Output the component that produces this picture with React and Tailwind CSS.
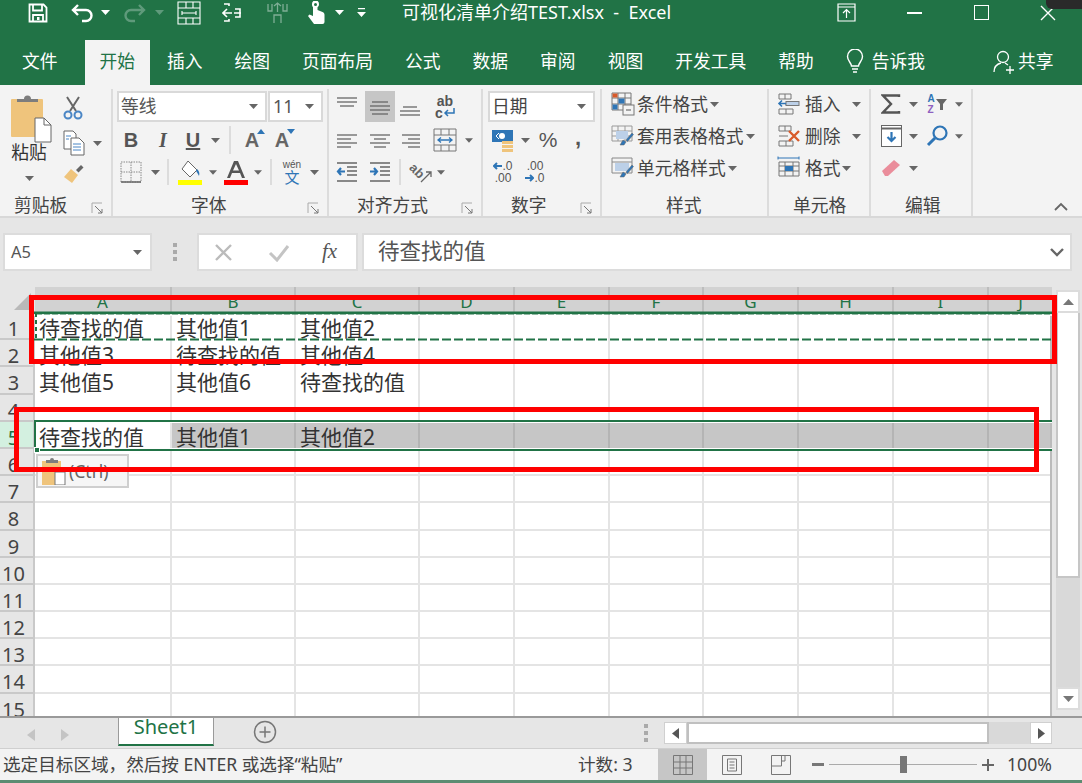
import React from 'react';

const columns = ['A', 'B', 'C', 'D', 'E', 'F', 'G', 'H', 'I', 'J'];
const gridCols = 'grid grid-cols-[137px_124px_124px_95px_95px_94px_95px_95px_95px_63px]';
const cells = {
  1: ['待查找的值', '其他值1', '其他值2'],
  2: ['其他值3', '待查找的值', '其他值4'],
  3: ['其他值5', '其他值6', '待查找的值'],
  5: ['待查找的值', '其他值1', '其他值2'],
};
const tabs = ['开始', '插入', '绘图', '页面布局', '公式', '数据', '审阅', '视图', '开发工具', '帮助'];

function Caret({ className = 'fill-[#666]' }) {
  return (
    <svg width="9" height="5" viewBox="0 0 9 5" className={className}>
      <path d="M0 0h9L4.5 5z" />
    </svg>
  );
}

function Sep({ className = '' }) {
  return <div className={`w-[2px] bg-[#dcdcdc] ${className}`} />;
}

function Launcher() {
  return (
    <svg width="13" height="13" viewBox="0 0 13 13" fill="none" stroke="#777">
      <path d="M1 11V1h10" stroke="#aaa" />
      <path d="M4 4l7 7M11 7v4H7" />
    </svg>
  );
}

function Label({ text, pad, launcher }) {
  return (
    <div className={`mt-auto h-[27px] pt-[5px] flex items-center pr-[7px] text-[#444] text-[17.75px] ${pad}`}>
      <span>{text}</span>
      {launcher && <span className="ml-auto mt-[6px] flex"><Launcher /></span>}
    </div>
  );
}

function Group({ width, children }) {
  return <div className={`${width} h-[127px] shrink-0 flex flex-col border-r-2 border-[#dcdcdc]`}>{children}</div>;
}

function Lines({ y, x1 = 1, x2 = 21, w = 22 }) {
  return (
    <svg width={w} height="22" viewBox={`0 0 ${w} 22`} stroke="#666" strokeWidth="1.3">
      {y.map((v, i) => <path key={i} d={`M${Array.isArray(x1) ? x1[i] : x1} ${v}H${Array.isArray(x2) ? x2[i] : x2}`} />)}
    </svg>
  );
}

function Brush() {
  return <path d="M9 21l3-5 3 2-2 3zM15 16l6-7 1.5 1.5-6 7z" fill="#2e75b6" stroke="#666" strokeWidth=".5" />;
}

function TitleBar() {
  return (
    <div className="h-[38px] pb-[13px] flex items-center text-white shrink-0 relative">
      <svg width="20" height="20" viewBox="0 0 20 20" fill="none" stroke="white" strokeWidth="1.8" className="ml-[28px]">
        <path d="M1.5 1.5h14l3 3v14h-17zM5 1.5v6h9v-6M5 18v-6h10v6" />
        <rect x="9" y="14" width="2.5" height="3" fill="white" stroke="none" />
      </svg>
      <svg width="23" height="20" viewBox="0 0 23 20" fill="none" stroke="white" strokeWidth="2.4" className="ml-[23px]">
        <path d="M2 7h13a5.5 5.5 0 0 1 0 11h-4M7 2L2 7l5 5" />
      </svg>
      <span className="ml-[7px]"><Caret className="fill-white" /></span>
      <svg width="23" height="20" viewBox="0 0 23 20" fill="none" stroke="#5f9a7b" strokeWidth="2.4" className="ml-[13px]">
        <path d="M21 7H8a5.5 5.5 0 0 0 0 11h4M16 2l5 5-5 5" />
      </svg>
      <span className="ml-[9px]"><Caret className="fill-[#5f9a7b]" /></span>
      <svg width="24" height="24" viewBox="0 0 24 24" fill="none" stroke="white" strokeWidth="1.1" className="ml-[13px]">
        <path d="M1 1h22v22H1zM1 7h22M1 17h22M9 1v6M16 1v6M9 17v6M16 17v6M5 12h14M5 10v4M19 10v4" />
      </svg>
      <svg width="20" height="24" viewBox="0 0 20 24" fill="none" stroke="white" strokeWidth="1.6" className="ml-[21px]">
        <path d="M2 3h5v2M12 12h7M13 8h5v8h-5M2 20h5v-2M10 12H1M5 8l-4 4 4 4" />
      </svg>
      <svg width="23" height="24" viewBox="0 0 23 24" fill="none" stroke="#7fae95" strokeWidth="1.3" className="ml-[24px]">
        <path d="M2 3v7h4V3M17 3v7h4V3M11.5 11V2M8 5l3.5-3L15 5M8 22v-8h7v8" />
      </svg>
      <svg width="19" height="24" viewBox="0 0 19 24" fill="white" className="ml-[17px]">
        <path d="M6 3a3.5 3.5 0 0 1 7 0c0 1.5-.5 2.5-1.5 3.2V9l5 2c1.5.6 2 1.5 2 3v7a2 2 0 0 1-2 2H8L2 15l1.5-1.5L7 15V6.2A4 4 0 0 1 6 3z" />
        <circle cx="9.5" cy="3.5" r="1.5" fill="#217346" />
      </svg>
      <span className="ml-[10px]"><Caret className="fill-white" /></span>
      <svg width="9" height="9" viewBox="0 0 9 9" fill="white" className="ml-[13px]">
        <path d="M1 0h7v1.3H1zM0 4h9L4.5 9z" />
      </svg>
      <span className="ml-[36px] text-[18px] whitespace-pre">可视化清单介绍TEST.xlsx  -  Excel</span>
      <div className="ml-auto flex items-center mr-[26px]">
        <svg width="19" height="19" viewBox="0 0 19 19" fill="none" stroke="white" strokeWidth="1.2">
          <path d="M1 1h17v17H1zM1 4h17M9.5 15V7M6 10l3.5-3.5L13 10" />
        </svg>
        <div className="w-[15px] h-[2px] bg-white ml-[51px]" />
        <div className="w-[15px] h-[15px] border-[1.5px] border-white ml-[52px]" />
        <svg width="16" height="16" viewBox="0 0 16 16" stroke="white" strokeWidth="1.4" className="ml-[51px]">
          <path d="M1 1l14 14M15 1L1 15" />
        </svg>
      </div>
    </div>
  );
}

function TabRow() {
  return (
    <div className="h-[47px] flex items-end text-white text-[17.75px] shrink-0 pl-[7px]">
      <div className="h-[45px] pb-[2px] px-[15px] flex items-center mr-[12px]">文件</div>
      <div className="flex gap-[2px]">
        {tabs.map((t) => (
          <div key={t} className={`h-[45px] pb-[2px] px-[15px] flex items-center whitespace-nowrap ${t === '开始' ? 'bg-[#f3f3f3] text-[#217346]' : ''}`}>{t}</div>
        ))}
      </div>
      <div className="h-[45px] pb-[2px] flex items-center ml-[17px]">
        <svg width="18" height="26" viewBox="0 0 18 26" fill="none" stroke="white" strokeWidth="1.4">
          <path d="M5.5 17c0-3-4-5-4-9.5a7.5 7.5 0 0 1 15 0c0 4.500-4 6.500-4 9.500zM6 20h6M7 23h4" />
        </svg>
        <span className="ml-[8px]">告诉我</span>
        <svg width="22" height="24" viewBox="0 0 22 24" fill="none" stroke="white" strokeWidth="1.3" className="ml-[68px]">
          <circle cx="10" cy="7" r="5.5" />
          <path d="M1 22c0-5 3-8 7-9M12 13l3 2M13 20h8M17 16v8" />
        </svg>
        <span className="ml-[3px]">共享</span>
      </div>
    </div>
  );
}

function ClipboardGroup() {
  return (
    <Group width="w-[113px]">
      <div className="flex">
        <div className="w-[62px] flex flex-col items-center pt-[6px]">
          <svg width="42" height="48" viewBox="0 0 42 48">
            <rect x="1" y="4" width="32" height="38" rx="1" fill="#efc47c" />
            <path d="M7 7V4h7a3.5 3.5 0 0 1 7 0h7v3z" fill="#7d7d7d" />
            <path d="M25 23h9l7 7v17H25z" fill="white" stroke="#666" />
            <path d="M34 23v7h7" fill="none" stroke="#666" />
          </svg>
          <span className="text-[17.75px] text-[#333] leading-[22px] -mt-[2px] -ml-[4px]">粘贴</span>
          <span className="mt-[13px] -ml-[4px] flex"><Caret /></span>
        </div>
        <div className="flex flex-col pt-[6px] pl-[1px]">
          <svg width="20" height="26" viewBox="0 0 20 26" fill="none">
            <path d="M4 2l9 14M16 2L7 16" stroke="#666" strokeWidth="2" />
            <circle cx="5" cy="20" r="3.5" stroke="#4a86c5" strokeWidth="2" />
            <circle cx="15" cy="20" r="3.5" stroke="#4a86c5" strokeWidth="2" />
          </svg>
          <div className="flex items-center mt-[9px]">
            <svg width="22" height="26" viewBox="0 0 22 26" fill="white" stroke="#666">
              <path d="M1 1h9l3 3v15H1z" />
              <path d="M8 8h8l5 5v12H8z" />
              <path d="M10 14h8M10 17h8M10 20h8M3 6h5M3 9h3" stroke="#4a86c5" fill="none" />
            </svg>
            <span className="ml-[8px] flex"><Caret /></span>
          </div>
          <svg width="22" height="22" viewBox="0 0 22 22" className="mt-[7px]">
            <path d="M1 14l7-8 7 6-6 8z" fill="#efc47c" />
            <path d="M13 7l5-5 2.5 2.5-5 5z" fill="#666" />
          </svg>
        </div>
      </div>
      <Label text="剪贴板" pad="pl-[14px]" launcher />
    </Group>
  );
}

function SmallA({ up }) {
  return (
    <div className="relative text-[#666] text-[20px] font-bold leading-[24px] font-['Liberation_Sans',sans-serif]">
      A
      <svg width="8" height="5" viewBox="0 0 8 5" className="absolute -right-[6px] top-[1px] fill-[#2e75b6]">
        <path d={up ? 'M0 5h8L4 0z' : 'M0 0h8L4 5z'} />
      </svg>
    </div>
  );
}

function FontGroup() {
  return (
    <Group width="w-[216px]">
      <div className="pl-[4px] pt-[2px]">
        <div className="flex h-[31px] gap-[1px]">
          <div className="w-[150px] bg-white border-2 border-[#d9d9d9] flex items-center pl-[2px] pr-[7px] text-[17.75px] text-[#555]">
            等线<span className="ml-auto flex"><Caret /></span>
          </div>
          <div className="w-[55px] bg-white border-2 border-[#d9d9d9] flex items-center pl-[3px] pr-[7px] text-[17.75px] text-[#555]">
            11<span className="ml-auto flex"><Caret /></span>
          </div>
        </div>
        <div className="flex items-center h-[36px] text-[#555]">
          <div className="w-[28px] text-center text-[20px] font-bold font-['Liberation_Sans',sans-serif]">B</div>
          <div className="w-[36px] text-center text-[20px] italic font-bold font-['Liberation_Serif',serif]">I</div>
          <div className="w-[24px] text-center text-[20px] font-bold underline font-['Liberation_Sans',sans-serif]">U</div>
          <div className="w-[20px] flex justify-center"><Caret /></div>
          <div className="w-[10px] flex justify-center"><Sep className="h-[28px]" /></div>
          <div className="w-[34px] flex justify-center"><SmallA up /></div>
          <div className="w-[26px] flex justify-center"><SmallA /></div>
        </div>
        <div className="flex items-center h-[28px]">
          <div className="w-[28px] flex justify-center">
            <svg width="22" height="22" viewBox="0 0 22 22" fill="none" stroke="#888" strokeDasharray="1.5 1">
              <path d="M1 1h20v20H1zM11 1v20M1 11h20" />
              <path d="M1 21h20" stroke="#666" strokeDasharray="none" strokeWidth="1.5" />
            </svg>
          </div>
          <div className="w-[20px] flex justify-center"><Caret /></div>
          <div className="w-[6px] flex justify-center"><Sep className="h-[26px]" /></div>
          <div className="w-[38px] flex justify-center">
            <svg width="24" height="26" viewBox="0 0 24 26">
              <path d="M10 2l9 9-7 7-8-8z" fill="white" stroke="#666" />
              <path d="M19 10c2 2 3 4 2 7-1-2-2-4-3-5z" fill="#2e75b6" />
              <rect y="21" width="24" height="5" fill="#ffff00" />
            </svg>
          </div>
          <div className="w-[8px] flex justify-center"><Caret /></div>
          <div className="w-[37px] flex justify-center">
            <svg width="24" height="26" viewBox="0 0 24 26">
              <path d="M3 19L10 2h4l7 17h-3l-2-5H8l-2 5zM9 11.5h6L12 5z" fill="#555" fillRule="evenodd" />
              <rect y="21" width="24" height="5" fill="#ff0000" />
            </svg>
          </div>
          <div className="w-[8px] flex justify-center"><Caret /></div>
          <div className="w-[18px] flex justify-center"><Sep className="h-[26px]" /></div>
          <div className="w-[24px] flex flex-col items-center leading-none">
            <span className="text-[10px] text-[#555] font-['Liberation_Sans',sans-serif]">wén</span>
            <span className="text-[15px] text-[#2e75b6] leading-[14px]">文</span>
          </div>
          <div className="w-[20px] flex justify-center"><Caret /></div>
        </div>
      </div>
      <Label text="字体" pad="pl-[78px]" launcher />
    </Group>
  );
}

function AlignGroup() {
  return (
    <Group width="w-[154px]">
      <div className="pt-[2px]">
        <div className="flex items-center h-[31px]">
          <div className="w-[36px] flex justify-center -mt-[8px]"><Lines y={[6, 10, 14]} x1={[1, 1, 4]} x2={[21, 21, 18]} /></div>
          <div className="w-[30px] h-[31px] bg-[#c6c6c6] flex items-center justify-center"><Lines y={[6, 10, 14, 18]} x1={[3, 1, 1, 3]} x2={[19, 21, 21, 19]} /></div>
          <div className="w-[30px] flex justify-center mt-[6px]"><Lines y={[8, 12, 16]} x1={[4, 1, 1]} x2={[18, 21, 21]} /></div>
          <div className="w-[40px] flex flex-col items-center text-[#555] leading-[12px] text-[14px] font-bold font-['Liberation_Sans',sans-serif]">
            <span>ab</span>
            <span className="flex items-center">c
              <svg width="12" height="9" viewBox="0 0 12 9" fill="none" stroke="#2e75b6" strokeWidth="1.5"><path d="M11 0v5H2M5 2L2 5l3 3" /></svg>
            </span>
          </div>
        </div>
        <div className="flex items-center h-[36px]">
          <div className="w-[36px] flex justify-center"><Lines y={[6, 10, 14, 18]} x1={1} x2={[21, 15, 21, 15]} /></div>
          <div className="w-[30px] flex justify-center"><Lines y={[6, 10, 14, 18]} x1={[1, 5, 1, 5]} x2={[21, 17, 21, 17]} /></div>
          <div className="w-[30px] flex justify-center"><Lines y={[6, 10, 14, 18]} x1={[3, 9, 3, 9]} x2={21} /></div>
          <div className="w-[40px] flex justify-center">
            <svg width="24" height="24" viewBox="0 0 24 24" fill="none" stroke="#777">
              <path d="M1 1h22v22H1zM1 7h22M1 17h22M8 1v6M16 1v6M8 17v6M16 17v6" />
              <path d="M5 12h14M8 9.5L5 12l3 2.5M16 9.5l3 2.5-3 2.5" stroke="#2e75b6" strokeWidth="1.3" />
            </svg>
          </div>
          <div className="w-[8px] flex justify-center"><Caret /></div>
        </div>
        <div className="flex items-center h-[28px]">
          <div className="w-[36px] flex justify-center">
            <svg width="22" height="22" viewBox="0 0 22 22" fill="none" stroke="#666" strokeWidth="1.3">
              <path d="M1 2h20M11 6h10M11 10h10M11 14h10M1 20h20" />
              <path d="M9 10.5H2M5 7l-3 3.5L5 14" stroke="#2e75b6" strokeWidth="2.2" />
            </svg>
          </div>
          <div className="w-[30px] flex justify-center">
            <svg width="22" height="22" viewBox="0 0 22 22" fill="none" stroke="#666" strokeWidth="1.3">
              <path d="M1 2h20M11 6h10M11 10h10M11 14h10M1 20h20" />
              <path d="M1 10.5h7M5 7l3 3.5L5 14" stroke="#2e75b6" strokeWidth="2.2" />
            </svg>
          </div>
          <div className="w-[10px] flex justify-center"><Sep className="h-[26px]" /></div>
          <div className="w-[32px] flex justify-center">
            <svg width="24" height="24" viewBox="0 0 24 24" fill="none" stroke="#666" strokeWidth="1.3">
              <path d="M12 22L22 12M22 17v-5h-5" />
              <text x="1" y="15" fontSize="13" fontWeight="700" fill="#666" stroke="none" transform="rotate(45 8 10)" fontFamily="Liberation Sans">ab</text>
            </svg>
          </div>
          <div className="w-[8px] flex justify-center"><Caret /></div>
        </div>
      </div>
      <Label text="对齐方式" pad="pl-[28px]" launcher />
    </Group>
  );
}

function NumberGroup() {
  return (
    <Group width="w-[119px]">
      <div className="pl-[5px] pt-[2px]">
        <div className="w-[107px] h-[31px] bg-white border-2 border-[#d9d9d9] flex items-center pl-[2px] pr-[7px] text-[17.75px] text-[#444]">
          日期<span className="ml-auto flex"><Caret /></span>
        </div>
        <div className="flex items-center h-[36px]">
          <div className="w-[30px] flex justify-center">
            <svg width="24" height="24" viewBox="0 0 24 24">
              <rect x="1" y="2" width="21" height="12" fill="#2e75b6" />
              <circle cx="11" cy="8" r="3" fill="white" />
              <path d="M5 8l3-3M5 8l3 3" stroke="white" />
              <rect x="11" y="13" width="11" height="3" fill="#efc47c" />
              <rect x="11" y="17" width="11" height="3" fill="#efc47c" />
              <rect x="11" y="21" width="11" height="3" fill="#efc47c" />
            </svg>
          </div>
          <div className="w-[14px] flex justify-center"><Caret /></div>
          <div className="w-[32px] text-center text-[21px] text-[#555] font-['Liberation_Sans',sans-serif]">%</div>
          <div className="w-[28px] text-center text-[22px] font-bold text-[#555] leading-none -mt-[4px] font-['Liberation_Sans',sans-serif]">,</div>
        </div>
        <div className="flex items-center h-[28px] text-[12px] leading-[12px] text-[#555] font-['Liberation_Sans',sans-serif]">
          <div className="w-[30px] flex flex-col items-center">
            <span className="flex items-center">
              <svg width="9" height="8" viewBox="0 0 9 8" fill="none" stroke="#2e75b6" strokeWidth="2"><path d="M9 4H1M4 1L1 4l3 3" /></svg>.0
            </span>
            <span>.00</span>
          </div>
          <div className="w-[34px] flex flex-col items-center">
            <span>.00</span>
            <span className="flex items-center">
              <svg width="9" height="8" viewBox="0 0 9 8" fill="none" stroke="#2e75b6" strokeWidth="2"><path d="M0 4h8M5 1l3 3-3 3" /></svg>.0
            </span>
          </div>
        </div>
      </div>
      <Label text="数字" pad="pl-[28px]" launcher />
    </Group>
  );
}

function StyleRow({ icon, text, gap = 'ml-[2px]', caretGap = 'ml-[2px]' }) {
  return (
    <div className="h-[32px] flex items-center text-[17.75px] text-[#444] whitespace-nowrap">
      <span className="w-[24px] flex">{icon}</span>
      <span className={gap}>{text}</span>
      <span className={`${caretGap} flex`}><Caret /></span>
    </div>
  );
}

function StylesGroup() {
  return (
    <Group width="w-[167px]">
      <div className="pl-[9px] -mt-[1px]">
        <StyleRow text="条件格式" icon={
          <svg width="24" height="24" viewBox="0 0 24 24" fill="none">
            <path d="M1 1h19v17H1zM1 6h19M1 12h19M7 1v17M14 1v17" stroke="#777" />
            <rect x="1.5" y="1.5" width="5" height="4" fill="#d85a2a" />
            <rect x="7.5" y="6.5" width="6" height="5" fill="#2e75b6" />
            <rect x="1.5" y="12.5" width="5" height="5" fill="#2e75b6" />
            <rect x="12" y="13" width="11" height="10" fill="#f3f3f3" stroke="#777" />
            <path d="M15 18h5" stroke="#555" />
          </svg>
        } />
        <StyleRow text="套用表格格式" icon={
          <svg width="24" height="24" viewBox="0 0 24 24" fill="none">
            <path d="M1 2h20v15H1zM1 7h20M1 12h20M7 2v15M14 2v15" stroke="#999" />
            <rect x="5" y="7" width="12" height="8" fill="#bcd0e8" />
            <Brush />
          </svg>
        } />
        <StyleRow text="单元格样式" icon={
          <svg width="24" height="24" viewBox="0 0 24 24" fill="none">
            <path d="M1 2h20v15H1zM1 6h20" stroke="#888" />
            <rect x="4" y="7" width="14" height="8" fill="#bcd0e8" />
            <Brush />
          </svg>
        } />
      </div>
      <Label text="样式" pad="pl-[64px]" />
    </Group>
  );
}

function CellsGroup() {
  return (
    <Group width="w-[102px]">
      <div className="pl-[8px] -mt-[1px]">
        <StyleRow text="插入" gap="ml-[4px]" caretGap="ml-[11px]" icon={
          <svg width="24" height="24" viewBox="0 0 24 24" fill="none">
            <path d="M2 2h12v5H2zM2 17h14v5H2zM8 2v5M9 17v5M8 12h14" stroke="#777" />
            <rect x="9" y="9.5" width="13" height="4" fill="#bcd0e8" stroke="#777" />
            <path d="M9 11.5H2M5 8.5l-3 3 3 3" stroke="#2e75b6" strokeWidth="1.6" />
          </svg>
        } />
        <StyleRow text="删除" gap="ml-[4px]" caretGap="ml-[11px]" icon={
          <svg width="24" height="24" viewBox="0 0 24 24" fill="none">
            <path d="M2 2h12v5H2zM2 17h14v5H2zM8 2v5M9 17v5M2 12h9" stroke="#777" />
            <path d="M12 7l10 10M22 7L12 17" stroke="#d85a2a" strokeWidth="2.4" />
          </svg>
        } />
        <StyleRow text="格式" gap="ml-[4px]" caretGap="ml-[1px]" icon={
          <svg width="24" height="24" viewBox="0 0 24 24" fill="none">
            <path d="M1 2h21M1 .5v3M22 .5v3" stroke="#2e75b6" />
            <path d="M2 6h20v14H2zM2 10h20M2 15h20M8 6v14M16 6v14" stroke="#777" />
            <rect x="8" y="10" width="8" height="5" fill="#2e75b6" />
          </svg>
        } />
      </div>
      <Label text="单元格" pad="pl-[24px]" />
    </Group>
  );
}

function EditGroup() {
  return (
    <Group width="w-[102px]">
      <div className="pl-[4px] -mt-[1px]">
        <div className="h-[32px] flex items-center">
          <div className="w-[32px] flex justify-center">
            <svg width="20" height="20" viewBox="0 0 20 20" fill="none" stroke="#555" strokeWidth="2.4"><path d="M18 3V1.500H2L10 10l-8 8.500h16V17" /></svg>
          </div>
          <div className="w-[12px] flex justify-center"><Caret /></div>
          <div className="w-[36px] flex justify-center items-center">
            <div className="flex flex-col text-[10px] font-bold leading-[11px] font-['Liberation_Sans',sans-serif]">
              <span className="text-[#2e75b6]">A</span>
              <span className="text-[#8e5fc0]">Z</span>
            </div>
            <svg width="11" height="12" viewBox="0 0 11 12" className="fill-[#666] ml-[1px]"><path d="M0 1h11L7 6v6H4V6z" /></svg>
          </div>
          <div className="w-[8px] flex justify-center"><Caret /></div>
        </div>
        <div className="h-[32px] flex items-center">
          <div className="w-[32px] flex justify-center">
            <svg width="21" height="22" viewBox="0 0 21 22" fill="white" stroke="#666">
              <rect x=".5" y=".5" width="20" height="21" />
              <path d="M.5 3.5h20" strokeWidth="2" />
              <path d="M10.5 7v9M6.5 12l4 4 4-4" fill="none" stroke="#2e75b6" strokeWidth="2.2" />
            </svg>
          </div>
          <div className="w-[12px] flex justify-center"><Caret /></div>
          <div className="w-[36px] flex justify-center">
            <svg width="23" height="22" viewBox="0 0 23 22" fill="none" stroke="#2e75b6" strokeWidth="2.2"><circle cx="14" cy="8" r="6.5" /><path d="M9 13l-7 7" strokeWidth="3" /></svg>
          </div>
          <div className="w-[8px] flex justify-center"><Caret /></div>
        </div>
        <div className="h-[32px] flex items-center">
          <div className="w-[32px] flex justify-center">
            <svg width="20" height="18" viewBox="0 0 20 18"><path d="M1 12l12-11 6 5L7 17H4z" fill="#ea8d9b" /></svg>
          </div>
          <div className="w-[12px] flex justify-center"><Caret /></div>
        </div>
      </div>
      <Label text="编辑" pad="pl-[34px]" />
    </Group>
  );
}

function Ribbon() {
  return (
    <div className="h-[133px] bg-[#f3f3f3] flex items-start pt-[4px] border-b-2 border-[#d8d8d8] shrink-0">
      <ClipboardGroup />
      <FontGroup />
      <AlignGroup />
      <NumberGroup />
      <StylesGroup />
      <CellsGroup />
      <EditGroup />
      <div className="ml-auto mr-[14px] mt-[113px] flex">
        <svg width="14" height="9" viewBox="0 0 14 9" fill="none" stroke="#666" strokeWidth="1.8"><path d="M1 8l6-6 6 6" /></svg>
      </div>
    </div>
  );
}

function FormulaBar() {
  return (
    <div className="h-[69px] bg-[#e6e6e6] flex items-start pt-[15px] pl-[3px] shrink-0">
      <div className="w-[149px] h-[38px] bg-white border-2 border-[#dcdcdc] flex items-center pl-[6px] pr-[8px] text-[16.5px] text-[#555]">
        A5<span className="ml-auto flex"><Caret /></span>
      </div>
      <div className="w-[45px] h-[38px] flex flex-col items-center justify-center gap-[3px]">
        <i className="w-[4px] h-[4px] bg-[#aaa]" /><i className="w-[4px] h-[4px] bg-[#aaa]" /><i className="w-[4px] h-[4px] bg-[#aaa]" />
      </div>
      <div className="w-[161px] h-[38px] bg-white border-2 border-[#dcdcdc] flex items-center pl-[15px]">
        <svg width="19" height="19" viewBox="0 0 19 19" stroke="#bbb" strokeWidth="2.4"><path d="M2 2l15 15M17 2L2 17" /></svg>
        <svg width="22" height="19" viewBox="0 0 22 19" fill="none" stroke="#c4c4c4" strokeWidth="3" className="ml-[35px]"><path d="M2 10l7 7L20 3" /></svg>
        <span className="ml-[32px] text-[21px] italic text-[#555] font-['Liberation_Serif',serif]">fx</span>
      </div>
      <div className="w-[710px] h-[38px] ml-[4px] bg-white border-2 border-[#dcdcdc] flex items-center pl-[14px] pr-[6px] text-[21.5px] text-[#555]">
        <span className="-mt-[2px]">待查找的值</span>
        <svg width="14" height="9" viewBox="0 0 14 9" fill="none" stroke="#666" strokeWidth="2.4" className="ml-auto"><path d="M1 1l6 6 6-6" /></svg>
      </div>
    </div>
  );
}

function Sheet() {
  const rows = Array.from({ length: 15 }, (_, i) => i + 1);
  return (
    <div className="h-[429px] flex bg-[#e6e6e6] shrink-0">
      <div className="w-[1052px] flex flex-col">
        <div className="h-[26px] flex">
          <div className="w-[35px] relative flex items-end justify-end pb-[3px]">
            <svg width="17" height="17" viewBox="0 0 17 17" className="fill-[#b9b9b9] mr-[4px]"><path d="M17 0v17H0z" /></svg>
          </div>
          <div className={`${gridCols} flex-1 bg-[#d2d2d2]`}>
            {columns.map((c) => (
              <div key={c} className="border-r-2 border-[#bdbdbd] last:border-r-0 text-center text-[17px] leading-[30px] text-[#217346] h-[26px] overflow-hidden">{c}</div>
            ))}
          </div>
        </div>
        <div className="h-[403px] overflow-hidden border-r-2 border-[#bbbbbb]">
          {rows.map((r) => (
            <div key={r} className="h-[27.2px] flex">
              <div className={`w-[35px] shrink-0 border-r-2 border-b-2 border-[#c9c9c9] text-[20px] leading-[32px] text-center pr-[6px] ${r === 5 ? 'bg-[#d3f0e0] text-[#217346]' : 'bg-[#e6e6e6] text-[#444]'}`}>{r}</div>
              <div className={`${gridCols} flex-1`}>
                {columns.map((c, i) => {
                  const selected = r === 5 && i > 0;
                  return (
                    <div key={c} className={`border-r-2 border-b-2 text-[21px] leading-[30px] text-[#333] pl-[4px] whitespace-nowrap ${selected ? 'bg-[#c6c6c6] border-[#b4b4b4]' : 'bg-white border-[#e4e4e4]'}`}>
                      {cells[r] && cells[r][i]}
                    </div>
                  );
                })}
              </div>
            </div>
          ))}
        </div>
      </div>
      <div className="w-[30px] flex flex-col items-center pl-[2px] pt-[3px]">
        <div className="w-[24px] h-[23px] bg-white border-2 border-[#dcdcdc] flex items-center justify-center"><svg width="11" height="6" viewBox="0 0 11 6" className="fill-[#777]"><path d="M0 6h11L5.5 0z" /></svg></div>
        <div className="w-[24px] h-[265px] bg-white border-2 border-t-0 border-[#c6c6c6]" />
        <div className="w-[24px] flex-1 bg-[#d9d9d9]" />
        <div className="w-[24px] h-[23px] mb-[6px] bg-white border-2 border-[#dcdcdc] flex items-center justify-center"><svg width="11" height="6" viewBox="0 0 11 6" className="fill-[#777]"><path d="M0 0h11L5.5 6z" /></svg></div>
      </div>
    </div>
  );
}

function TabBar() {
  return (
    <div className="h-[33px] bg-[#e6e6e6] border-t-2 border-[#9a9a9a] border-b border-b-[#cfcfcf] flex items-start shrink-0">
      <svg width="8" height="12" viewBox="0 0 8 12" className="fill-[#c4c4c4] ml-[27px] mt-[11px]"><path d="M8 0v12L0 6z" /></svg>
      <svg width="8" height="12" viewBox="0 0 8 12" className="fill-[#c4c4c4] ml-[26px] mt-[11px]"><path d="M0 0v12l8-6z" /></svg>
      <div className="ml-[49px] w-[96px] h-[28px] bg-white border-x border-[#9a9a9a] border-b-2 border-b-[#217346] text-center text-[20px] leading-[18px] text-[#217346]">Sheet1</div>
      <svg width="24" height="24" viewBox="0 0 24 24" fill="none" stroke="#777" strokeWidth="1.5" className="ml-[39px] mt-[2px]">
        <circle cx="12" cy="12" r="10.5" />
        <path d="M12 6.5v11M6.5 12h11" />
      </svg>
      <div className="ml-[367px] mt-[5px] h-[20px] flex flex-col justify-center gap-[3px]">
        <i className="w-[4px] h-[4px] bg-[#aaa]" /><i className="w-[4px] h-[4px] bg-[#aaa]" /><i className="w-[4px] h-[4px] bg-[#aaa]" />
      </div>
      <div className="ml-[16px] mt-[4px] flex h-[22px]">
        <div className="w-[23px] bg-white border border-[#d0d0d0] flex items-center justify-center"><svg width="7" height="11" viewBox="0 0 7 11" className="fill-[#555]"><path d="M7 0v11L0 5.5z" /></svg></div>
        <div className="w-[302px] bg-white border-2 border-[#c0c0c0]" />
        <div className="w-[41px] bg-[#d9d9d9]" />
        <div className="w-[22px] bg-white border border-[#d0d0d0] flex items-center justify-center"><svg width="7" height="11" viewBox="0 0 7 11" className="fill-[#555]"><path d="M0 0v11l7-5.5z" /></svg></div>
      </div>
    </div>
  );
}

function StatusBar() {
  return (
    <div className="flex-1 bg-[#f3f3f3] flex items-center text-[17.6px] text-[#444] border-b-[3px] border-[#5c8c72]">
      <span className="w-[345px] ml-[3px] whitespace-nowrap">选定目标区域，然后按 ENTER 或选择“粘贴”</span>
      <span className="w-[54px] ml-[230px] whitespace-nowrap">计数: 3</span>
      <div className="ml-[26px] w-[49px] h-full bg-[#c6c6c6] flex items-center justify-center">
        <svg width="20" height="20" viewBox="0 0 20 20" fill="none" stroke="#777"><path d="M.5.5h19v19H.5zM.5 7h19M.5 13h19M7 .5v19M13 .5v19" /></svg>
      </div>
      <svg width="20" height="20" viewBox="0 0 20 20" fill="none" stroke="#777" className="ml-[15px]"><path d="M.5.5h19v19H.5zM5.5 4h9v12h-9zM7.500 7h5M7.500 10h5M7.500 13h5" /></svg>
      <svg width="20" height="20" viewBox="0 0 20 20" fill="none" stroke="#777" className="ml-[29px]"><path d="M.5.5h19v19H.5zM.5 11h10V.5M10.500 6H14V.5" /></svg>
      <div className="ml-[21px] w-[12px] h-[3px] bg-[#777]" />
      <div className="ml-[5px] w-[148px] h-[1.5px] bg-[#aaa] flex items-center">
        <div className="ml-[71px] w-[7px] h-[17px] bg-[#777] shrink-0" />
      </div>
      <svg width="12" height="12" viewBox="0 0 12 12" stroke="#666" strokeWidth="2" className="ml-[5px]"><path d="M6 0v12M0 6h12" /></svg>
      <span className="ml-[13px]">100%</span>
    </div>
  );
}

export default function App() {
  return (
    <div className="relative w-[1082px] h-[783px] overflow-hidden bg-[#217346] flex flex-col font-['Noto_Sans','Noto_Sans_CJK_SC',sans-serif]">
      <TitleBar />
      <TabRow />
      <Ribbon />
      <FormulaBar />
      <Sheet />
      <TabBar />
      <StatusBar />

      {/* window shadow in the corner */}
      <div className="absolute top-0 right-0 w-[36px] h-[9px] rounded-bl-[6px] bg-[#2a2a2a]" />

      {/* copied range, marching ants */}
      <svg width="1018" height="32" viewBox="0 0 1018 32" fill="none" className="absolute left-[34px] top-[311px]">
        <path d="M0 2h1018" stroke="#217346" strokeWidth="3" />
        <path d="M0 4h1018" stroke="white" strokeWidth="1.5" strokeDasharray="2 6" />
        <path d="M0 28.5h1018" stroke="#217346" strokeWidth="2" strokeDasharray="9 3" />
        <path d="M2 2v26" stroke="#217346" strokeWidth="2" strokeDasharray="4 3" />
      </svg>

      {/* pasted selection */}
      <div className="absolute left-[34px] top-[420px] w-[1018px] h-[31px] border-y-2 border-[#217346]">
        <div className="h-full border-y border-white" />
      </div>
      <div className="absolute left-[34px] top-[420px] w-[2px] h-[31px] bg-[#217346]" />
      <div className="absolute left-[34px] top-[447px] w-[6px] h-[6px] bg-[#217346] border border-white" />

      {/* paste options button */}
      <div className="absolute left-[36px] top-[454px] w-[93px] h-[34px] bg-[#f6f6f6] border-2 border-[#cfcfcf] flex items-center pl-[4px] text-[17.5px] text-[#666]">
        <svg width="24" height="27" viewBox="0 0 24 27">
          <rect x="0" y="3" width="19" height="24" fill="#efc47c" />
          <path d="M4 5V2h4a2 2 0 0 1 4 0h4v3z" fill="#7d7d7d" />
          <rect x="13" y="14" width="10" height="13" fill="white" stroke="#777" />
        </svg>
        <span className="ml-[3px]">(Ctrl)</span>
      </div>

      {/* red annotation boxes */}
      <div className="absolute left-[29px] top-[295px] w-[1028px] h-[69px] border-[5px] border-[#ff0000]" />
      <div className="absolute left-[14px] top-[407px] w-[1025px] h-[65px] border-[5px] border-[#ff0000]" />
    </div>
  );
}
